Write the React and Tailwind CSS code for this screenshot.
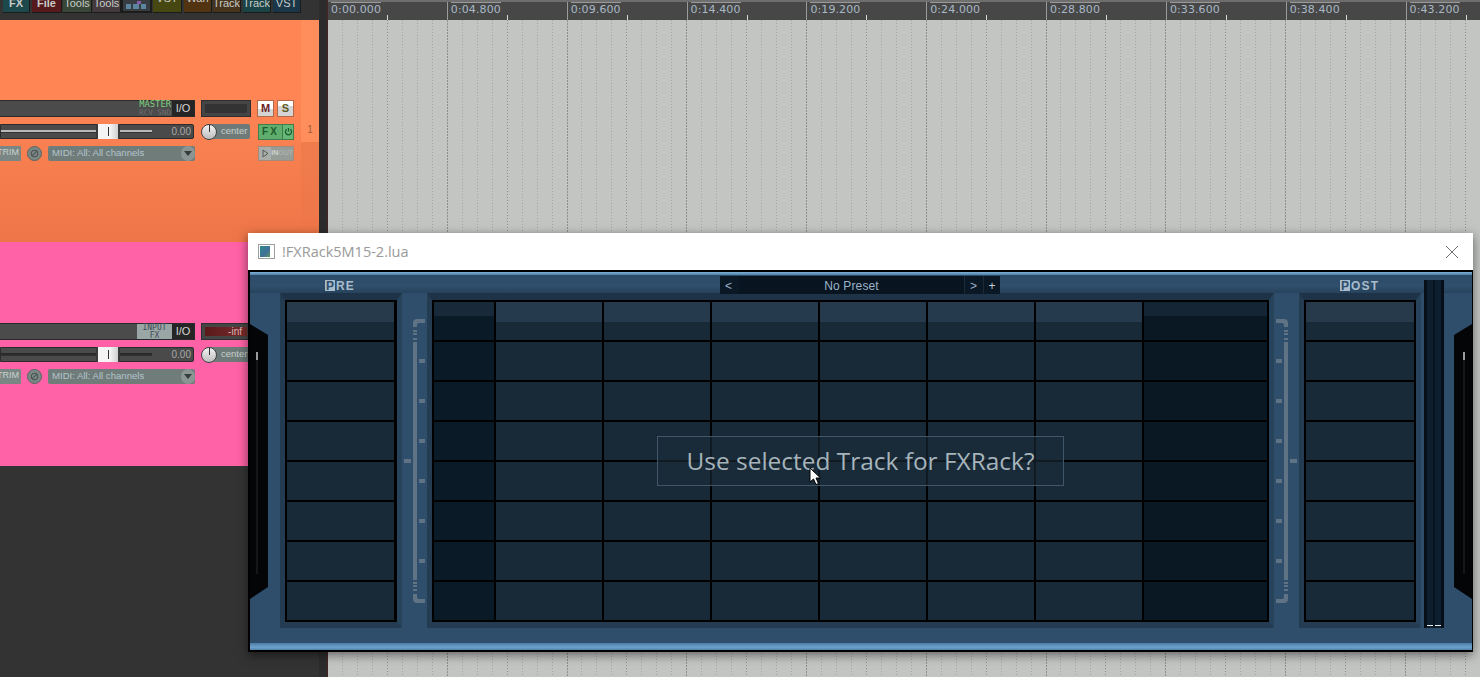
import React from "react";

const ui = { fontFamily: '"Liberation Sans", Arial, sans-serif' };
const verdana = { fontFamily: '"DejaVu Sans", Verdana, sans-serif' };
const mono = { fontFamily: '"DejaVu Sans Mono", "Liberation Mono", monospace' };
const segoe = { fontFamily: '"Open Sans", "Noto Sans", sans-serif' };

const tools = [
  ["FX", "w-[27px] bg-[#1d484c]", "ml-[3px]", "-translate-y-[3px] font-bold"],
  ["File", "w-[30px] bg-[#561a1d]", "ml-[2px]", "-translate-y-[3px] font-bold"],
  ["Tools", "w-[29px] bg-[#374636]", "ml-[1px]", "-translate-y-[3px]"],
  ["Tools", "w-[28px] bg-[#443a3e]", "ml-[1px]", "-translate-y-[3px]"],
  [null, "w-[31px] bg-[#363c40]", "ml-[0px]", ""],
  ["VST", "w-[29px] bg-[#474712]", "ml-[1px]", "-translate-y-[8px]"],
  ["Wah", "w-[28px] bg-[#523412]", "ml-[2px]", "-translate-y-[8px]"],
  ["Track", "w-[28px] bg-[#47341c]", "ml-[1px]", "-translate-y-[3px]"],
  ["Track", "w-[28px] bg-[#1b4446]", "ml-[2px]", "-translate-y-[3px]"],
  ["VST", "w-[28px] bg-[#1a3648]", "ml-[2px]", "-translate-y-[3px]"],
];

function Toolbar() {
  return (
    <div className="h-[20px] shrink-0 bg-[#333333] flex items-start overflow-hidden">
      {tools.map(([t, c, m, shift], i) =>
        t ? (
          <div key={i} className={`h-[13px] ${c} ${m} shrink-0 border-r border-b border-[#1a1a1a] flex items-end justify-center overflow-hidden`}>
            <span className={`text-[11px] leading-[12px] text-[#c8ccc8] whitespace-nowrap ${shift}`} style={ui}>{t}</span>
          </div>
        ) : (
          <div key={i} className={`h-[13px] ${c} ${m} shrink-0 border-2 border-t-0 border-[#1c1c1c] overflow-hidden`}>
            <svg width="27" height="11" viewBox="0 0 27 11" className="block">
              <rect x="3" y="4" width="5" height="5" fill="#5c86a0" />
              <rect x="10" y="4" width="6" height="5" fill="#5c86a0" />
              <rect x="18" y="4" width="5" height="5" fill="#5c86a0" />
              <rect x="14" y="1" width="4" height="3" fill="#8a5aa8" />
            </svg>
          </div>
        )
      )}
    </div>
  );
}

function Pill({ className = "", children }) {
  return <div className={`flex items-center ${className}`} style={ui}>{children}</div>;
}

function Track({ bg, top, tag, meter, grooveDark, first }) {
  return (
    <div className={`${bg} flex shrink-0 overflow-hidden`} style={{ height: first ? 222 : 224 }}>
      <div className="w-[301px] shrink-0 overflow-hidden" style={{ paddingTop: top }}>
        {/* row 1 */}
        <div className="flex h-[17px] items-stretch">
          <div className="w-[195px] bg-[#4b4b4b] border-y border-r border-[#2a2a2a] rounded-r-[1px] flex justify-end">
            {tag}
            <div className="w-[22px] bg-[#252525] flex items-center justify-center text-[11px] text-[#d6d6d6]" style={ui}>I/O</div>
          </div>
          <div className="ml-[6px] w-[50px] bg-[#454545] border border-[#2e2e2e] p-[3px] flex">{meter}</div>
          {first && (
            <>
              <div className="ml-[6px] w-[17px] bg-[linear-gradient(#ffffff_55%,#d4d4d4_55%)] border border-[#b06a48] text-[#6a1f1f] text-[11px] font-bold flex items-center justify-center" style={ui}>M</div>
              <div className="ml-[3px] w-[17px] bg-[linear-gradient(#ffffff_35%,#d4d4d4_35%)] border border-[#b06a48] text-[#5c5a1f] text-[11px] font-bold flex items-center justify-center" style={ui}>S</div>
            </>
          )}
        </div>
        {/* row 2 */}
        <div className="flex mt-[7px] h-[15px] items-center">
          <div className="relative w-[194px] h-[15px] bg-[#4a4a4a] border border-[#2c2c2c] rounded-r-[2px] flex items-center justify-end pr-[2px]">
            <div className={`absolute left-0 top-[5px] w-[151px] h-[3px] ${grooveDark ? "bg-[#2a2a2a]" : "bg-[#b9b9b9]"} border-b border-[#333333]`}></div>
            <span className="text-[10px] text-[#a8a8a8]" style={ui}>0.00</span>
            <div className="absolute left-[95px] -top-[1px] w-[24px] h-[15px] bg-[linear-gradient(90deg,#f4f4f4_60%,#d0d0d0)] border-x-2 border-[#3a3a3a] flex items-center justify-center">
              <div className="w-px h-[9px] bg-[#333333]"></div>
            </div>
          </div>
          <div className="ml-[7px] w-[49px] h-[15px] relative">
            <div className="absolute left-[6px] top-0 w-[43px] h-[15px] bg-[#6e7a78] rounded-r-[2px] text-[9.5px] text-[#c8d0cc] flex items-center pl-[14px]" style={ui}>center</div>
            <div className="absolute left-0 top-0 w-[16px] h-[16px] rounded-full bg-[linear-gradient(#f2f2f2,#bdbdbd)] border border-[#444444] flex justify-center">
              <div className="w-px h-[7px] bg-[#333333]"></div>
            </div>
          </div>
          {first && (
            <div className="ml-[8px] w-[36px] h-[16px] flex bg-[#5fae6e] border border-[#3f7d4c] text-[#1f5c2c] text-[10px] font-bold" style={ui}>
              <div className="w-[23px] flex items-center justify-center tracking-[2px]">FX</div>
              <div className="flex-1 bg-[#66b878] border-l border-[#3f7d4c] flex items-center justify-center">
                <svg width="9" height="9" viewBox="0 0 10 10" fill="none" stroke="#1f5c2c" strokeWidth="1.4"><path d="M3 2.500a3.400 3.400 0 1 0 4 0M5 1v4" /></svg>
              </div>
            </div>
          )}
        </div>
        {/* row 3 */}
        <div className="flex mt-[6px] h-[16px] items-center">
          <Pill className="w-[21px] h-[15px] bg-[#7a8684] rounded-r-[1px] justify-end pr-[2px] text-[9px] text-[#c9d2cf]">TRIM</Pill>
          <div className="ml-[6px] w-[15px] h-[15px] rounded-full bg-[#7b8785] border border-[#596563] flex items-center justify-center">
            <svg width="9" height="9" viewBox="0 0 10 10" fill="none" stroke="#4b5553" strokeWidth="1.2"><circle cx="5" cy="5" r="3.600" /><path d="M2 8 8 2" /></svg>
          </div>
          <Pill className="relative ml-[6px] w-[147px] h-[15px] bg-[#6f7c7a] rounded-[2px] pl-[4px] text-[9.6px] text-[#b4c4cc]">
            MIDI: All: All channels
            <div className="absolute right-0 top-0 w-[14px] h-[15px] rounded-full bg-[#8b9593] flex items-center justify-center">
              <div className="w-0 h-0 border-x-[4px] border-x-transparent border-t-[5px] border-t-[#333d3b]"></div>
            </div>
          </Pill>
          {first && (
            <div className="ml-[63px] w-[36px] h-[15px] flex bg-[#969c98] border border-[#a58a78]">
              <div className="w-[13px] bg-[#a9aeaa] flex items-center justify-center">
                <svg width="7" height="9" viewBox="0 0 7 9" fill="none" stroke="#555c58"><path d="M1 1v7l5-3.500z" /></svg>
              </div>
              <div className="flex-1 flex items-center justify-center text-[7px] font-bold" style={ui}>
                <span className="text-[#cfd4d0]">IN</span><span className="text-[#adb3af]">OUT</span>
              </div>
            </div>
          )}
        </div>
      </div>
      {first ? (
        <div className="w-[18px] shrink-0 flex flex-col">
          <div className="h-[122px] bg-[#ff8e5c] flex items-end justify-center pb-[5px] text-[10px] text-[#9a5a3c]" style={ui}>1</div>
          <div className="flex-1 bg-[linear-gradient(#f07c4e,#ee7547)]"></div>
        </div>
      ) : (
        <div className="w-[18px] shrink-0"></div>
      )}
    </div>
  );
}

const marks = ["0:00.000","0:04.800","0:09.600","0:14.400","0:19.200","0:24.000","0:28.800","0:33.600","0:38.400","0:43.200"];

function Ruler() {
  return (
    <div className="h-[20px] shrink-0 bg-[#474747] border-t-2 border-[#6e6e6e] flex overflow-hidden">
      {marks.map((m) => (
        <div key={m} className="w-[119.85px] shrink-0 relative flex border-r border-[#9a9a9a] box-border">
          <div className="ml-[3px] h-[11px] border-t border-[#9a9a9a] text-[11px] leading-[12px] text-[#a9b8c6] pt-[1px] tracking-[0.1px]" style={verdana}>{m}</div>
          <div className="absolute left-[59px] bottom-0 w-px h-[5px] bg-[#d8d8d8]"></div>
        </div>
      ))}
    </div>
  );
}

function Arrange() {
  const cols = Array.from({ length: 77 });
  return (
    <div className="flex-1 bg-[#c3c5c3] flex overflow-hidden">
      {cols.map((_, i) => (
        <div key={i} className="w-[14.98px] shrink-0 h-full flex justify-end">
          <div
            className={`w-px h-full ${
              i % 8 === 7
                ? "bg-[repeating-linear-gradient(#8e908e_0_2px,transparent_2px_3px)]"
                : i % 8 === 3
                ? "bg-[repeating-linear-gradient(#8e908e_0_1px,transparent_1px_3px)]"
                : "bg-[repeating-linear-gradient(#a2a4a2_0_1px,transparent_1px_3px)]"
            }`}
          ></div>
        </div>
      ))}
    </div>
  );
}

const rows = [0, 1, 2, 3, 4, 5, 6, 7];

function Col({ w, base, head, headH }) {
  return (
    <div className="flex flex-col gap-[2px] shrink-0" style={{ width: w }}>
      {rows.map((r) =>
        r === 0 ? (
          <div key={r} className="h-[38px]" style={{ background: base }}>
            <div style={{ height: headH, background: head }}></div>
          </div>
        ) : (
          <div key={r} className="h-[38px]" style={{ background: base }}></div>
        )
      )}
    </div>
  );
}

function Frame({ className = "", children }) {
  return (
    <div className={`shrink-0 h-[335px] bg-black border-x-[5px] border-t-[7px] border-b-[6px] border-t-[#1e3347] border-l-[#243c52] border-r-[#27435c] border-b-[#243c52] ${className}`}>
      {children}
    </div>
  );
}

function Bracket({ flip }) {
  return (
    <svg width="23" height="286" viewBox="0 0 23 286" className={`block shrink-0 ${flip ? "-scale-x-100" : ""}`} fill="#5f7385">
      <path d="M23 0H15Q11 0 11 4V8H15V6Q15 4 17 4H23Z" />
      <rect x="11" y="11" width="4" height="2" />
      <rect x="11" y="14" width="4" height="2" />
      <rect x="11" y="19" width="4" height="2" />
      <rect x="11" y="23" width="4" height="238" />
      <rect x="11" y="263" width="4" height="2" />
      <rect x="11" y="266" width="4" height="2" />
      <rect x="11" y="270" width="4" height="2" />
      <path d="M11 275H15V277Q15 280 17 280H23V284H15Q11 284 11 280Z" />
      {[40, 80, 120, 160, 200, 240].map((y) => (
        <rect key={y} x="17" y={y} width="6" height="4" />
      ))}
      <rect x="2" y="140" width="7" height="4" />
    </svg>
  );
}

function Rack() {
  return (
    <div className="relative h-[378px] bg-[#2e4e6c] flex flex-col overflow-hidden">
      <div className="h-[3px] shrink-0 bg-[linear-gradient(#7fb0d6,#4f7fa6)]"></div>
      {/* header */}
      <div className="h-[18px] shrink-0 flex bg-[linear-gradient(#2c4b68,#2f4f6c_60%,#27425c)] text-[12px] font-bold text-[#a9bccb]" style={ui}>
        <div className="ml-[75px] w-[30px] mt-[5px] flex items-center h-[11px] tracking-[1px]">
          <span className="w-[10px] h-[11px] bg-[#a9bccb] text-[#2e4e6c] flex items-center justify-center leading-none tracking-normal">P</span>
          <span className="ml-[1px]">RE</span>
        </div>
        <div className="ml-[365px] w-[280px] mt-[1px] h-[18px] bg-[#0a1825] flex text-[12px] font-normal text-[#9db2c8] relative z-10">
          <div className="w-[17px] flex items-center justify-center pt-[1px]">&lt;</div>
          <div className="ml-[2px] w-[225px] bg-[#081521] flex items-center justify-center tracking-[0.15px] pt-[1px]">No Preset</div>
          <div className="w-[18px] border-l border-[#1a2a38] flex items-center justify-center pt-[1px]">&gt;</div>
          <div className="ml-[1px] flex-1 border-l border-[#1a2a38] flex items-center justify-center text-[#c4d2dc] pt-[1px]">+</div>
        </div>
        <div className="ml-[340px] mt-[5px] flex items-center h-[11px] tracking-[1.2px]">
          <span className="w-[10px] h-[11px] bg-[#a9bccb] text-[#2e4e6c] flex items-center justify-center leading-none tracking-normal">P</span>
          <span className="ml-[1px]">OST</span>
        </div>
      </div>
      {/* body */}
      <div className="flex items-start pl-[30px]">
        <Frame className="w-[122px] pl-[2px] pt-[2px]">
          <Col w={107} base="#182937" head="#263a4c" headH={20} />
        </Frame>
        <div className="w-[25px] shrink-0 pt-[26px]">
          <Bracket />
        </div>
        <Frame className="w-[847px] pl-[2px] pt-[2px]">
          <div className="flex gap-[2px]">
            <Col w={60} base="#0b1a27" head="#182a3a" headH={14} />
            {[0, 1, 2, 3, 4, 5].map((i) => (
              <Col key={i} w={106} base="#182937" head="#253a4c" headH={20} />
            ))}
            <Col w={123} base="#0a1824" head="#142635" headH={14} />
          </div>
        </Frame>
        <div className="w-[25px] shrink-0 pt-[26px] pl-[2px]">
          <Bracket flip />
        </div>
        <Frame className="w-[122px] pl-[2px] pt-[2px]">
          <Col w={108} base="#182937" head="#263a4c" headH={20} />
        </Frame>
        <div className="relative ml-[3px] -mt-[13px] w-[20px] h-[348px] bg-[#08141f] border-x-[3px] border-[#060f18] flex gap-[2px] shrink-0">
          <div className="flex-1 bg-[#0d1f2e] relative">
            <div className="absolute bottom-[2px] left-0 right-0 h-px bg-[#e8eef2]"></div>
          </div>
          <div className="flex-1 bg-[#0d1f2e] relative">
            <div className="absolute bottom-[2px] left-0 right-0 h-px bg-[#e8eef2]"></div>
          </div>
        </div>
      </div>
      {/* bottom strip */}
      <div className="mt-auto h-[7px] shrink-0 bg-[linear-gradient(#4a7ba6,#6fa3cd_60%,#4f82ab)]"></div>

      {/* side bumpers */}
      <svg width="19" height="276" viewBox="0 0 19 276" className="absolute left-0 top-[52px]">
        <path d="M0 0 18 11V263L0 275Z" fill="#030507" />
        <path d="M7 28V250" stroke="#16161a" strokeWidth="2" />
        <path d="M7 28V36" stroke="#c8c8c8" strokeWidth="1.500" />
      </svg>
      <svg width="19" height="276" viewBox="0 0 19 276" className="absolute right-0 top-[52px]">
        <path d="M19 0 1 11V263L19 275Z" fill="#030507" />
        <path d="M11 28V250" stroke="#16161a" strokeWidth="2" />
        <path d="M11 28V36" stroke="#c8c8c8" strokeWidth="1.500" />
      </svg>

      {/* dialog */}
      <div className="absolute left-[407px] top-[164px] w-[407px] h-[50px] border border-[#3f5768] bg-[#1a2c3a]/60 flex items-center justify-center">
        <span className="text-[24.45px] text-[#a6b4bb] whitespace-nowrap" style={segoe}>Use selected Track for FXRack?</span>
      </div>
      {/* cursor */}
      <svg width="13" height="19" viewBox="0 0 13 19" className="absolute left-[559px] top-[195px]">
        <path d="M1 1V15L4.500 12 7 17.500 9.500 16.500 7 11H11.500Z" fill="#ffffff" stroke="#000000" />
      </svg>
    </div>
  );
}

function FxWindow() {
  return (
    <div className="absolute left-[248px] top-[233px] w-[1225px] h-[419px] bg-white flex flex-col shadow-[0_3px_10px_rgba(0,0,0,0.5)]">
      <div className="h-[37px] shrink-0 flex items-center pl-[10px] pr-[14px]">
        <div className="w-[17px] h-[15px] border border-[#9aa0a0] bg-white p-[1px] flex shrink-0">
          <div className="w-[10px] bg-[linear-gradient(135deg,#2f8a8a,#3f6f9a_60%,#5f9a5a)]"></div>
        </div>
        <span className="ml-[7px] text-[14.5px] text-[#999999]" style={segoe}>!FXRack5M15-2.lua</span>
        <svg width="14" height="14" viewBox="0 0 14 14" className="ml-auto" stroke="#6f6f6f" fill="none">
          <path d="M1 1 13 13M13 1 1 13" />
        </svg>
      </div>
      <div className="flex-1 bg-black px-[2px] pt-[2px] pb-[2px] pr-[1px]">
        <Rack />
      </div>
    </div>
  );
}

export default function App() {
  return (
    <div className="relative w-[1480px] h-[677px] overflow-hidden flex bg-[#333333]">
      <div className="w-[319px] shrink-0 flex flex-col">
        <Toolbar />
        <Track
          first
          bg="bg-[linear-gradient(#ff8555,#ff8555_35%,#ed7547)]"
          top={80}
          tag={
            <div className="w-[34px] leading-[7.500px] text-right pr-[1px] whitespace-nowrap" style={mono}>
              <div className="text-[8.8px] text-[#7fcf7f]">MASTER</div>
              <div className="text-[7.6px] text-[#6e6e6e]">RCV SND</div>
            </div>
          }
          meter={<div className="flex-1 bg-[#333333]"></div>}
        />
        <Track
          bg="bg-[#ff62a6]"
          top={81}
          grooveDark
          tag={
            <div className="w-[35px] bg-[#9aa5a5] text-[8px] leading-[7.500px] text-[#3d4a56] text-center" style={mono}>
              INPUT<br />FX
            </div>
          }
          meter={
            <div className="flex-1 bg-[linear-gradient(90deg,#5a1a1a,#7a2c2c)] flex justify-end items-center pr-[5px] text-[10px] text-[#d8b8b8]" style={ui}>-inf</div>
          }
        />
        <div className="flex-1 bg-[#333333]"></div>
      </div>
      <div className="w-[9px] shrink-0 bg-[#2c2c2c] border-r border-[#4a2222]"></div>
      <div className="flex-1 flex flex-col min-w-0">
        <Ruler />
        <Arrange />
      </div>
      <FxWindow />
    </div>
  );
}
